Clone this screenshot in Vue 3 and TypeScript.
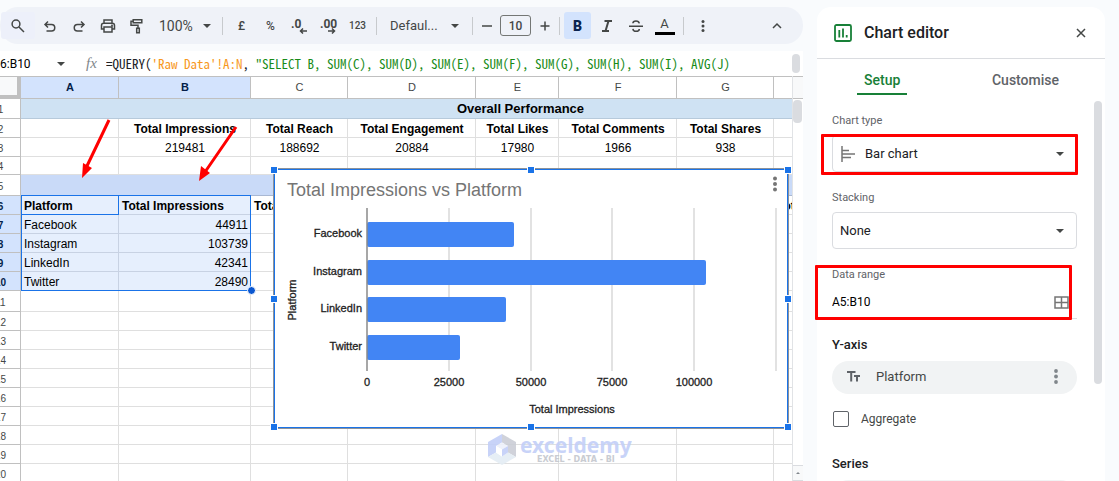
<script setup lang="ts">
import { ref } from 'vue'

type Kind = 'banner' | 'band' | 'head' | 'num' | 'plain'
interface SheetRow {
  n: number
  kind: Kind
  size: number
  cells: string[]
}

const columns = ['A', 'B', 'C', 'D', 'E', 'F', 'G', '']

const blank = (n: number, size = 19): SheetRow => ({ n, kind: 'plain', size, cells: Array(8).fill('') })

const rows: SheetRow[] = [
  { n: 1, kind: 'banner', size: 20, cells: ['Overall Performance'] },
  {
    n: 2,
    kind: 'head',
    size: 19,
    cells: ['', 'Total Impressions', 'Total Reach', 'Total Engagement', 'Total Likes', 'Total Comments', 'Total Shares', ''],
  },
  { n: 3, kind: 'num', size: 19, cells: ['', '219481', '188692', '20884', '17980', '1966', '938', ''] },
  blank(4, 18),
  { n: 5, kind: 'band', size: 21, cells: [''] },
  { n: 6, kind: 'plain', size: 19, cells: ['Platform', 'Total Impressions', 'Total', '', '', '', '', 'Total'] },
  { n: 7, kind: 'plain', size: 19, cells: ['Facebook', '44911', '', '', '', '', '', ''] },
  { n: 8, kind: 'plain', size: 19, cells: ['Instagram', '103739', '', '', '', '', '', ''] },
  { n: 9, kind: 'plain', size: 19, cells: ['LinkedIn', '42341', '', '', '', '', '', ''] },
  { n: 10, kind: 'plain', size: 19, cells: ['Twitter', '28490', '', '', '', '', '', ''] },
  blank(11, 21),
  ...[12, 13, 14, 15, 16, 17, 18, 19, 20].map((n) => blank(n)),
]

const inSelection = (n: number) => n >= 6 && n <= 10

const chart = [
  { label: 'Facebook', value: 44911 },
  { label: 'Instagram', value: 103739 },
  { label: 'LinkedIn', value: 42341 },
  { label: 'Twitter', value: 28490 },
]
const ticks = [0, 25000, 50000, 75000, 100000, 125000]
const toX = (v: number) => 92 + Math.round((v / 125000) * 409)
const barY = (i: number) => 52 + Math.round(i * 37.6)

const handles = ['nw', 'n', 'ne', 'w', 'e', 'sw', 's', 'se']

const zoom = ref('100%')
const font = ref('Defaul...')
const fontSize = ref('10')
const nameBox = ref('6:B10')
const chartType = ref('Bar chart')
const stacking = ref('None')
const dataRange = ref('A5:B10')
const aggregate = ref(false)
</script>

<template>
  <div class="page">
    <main class="workspace">
      <div class="toolbar" role="toolbar" aria-label="Formatting">
        <button class="tool search" aria-label="Search">
          <svg width="16" height="16" viewBox="0 0 16 16"><circle cx="6" cy="6" r="3.9" /><path d="M9 9l5 5" /></svg>
        </button>
        <button class="tool" aria-label="Undo">
          <svg width="16" height="16" viewBox="0 0 16 16"><path d="M6 3.500L3 6.500l3 3M3.200 6.500h6.300a3.200 3.200 0 0 1 0 6.500H4.500" /></svg>
        </button>
        <button class="tool" aria-label="Redo">
          <svg width="16" height="16" viewBox="0 0 16 16"><path d="M10 3.500l3 3-3 3M12.800 6.500H6.500a3.200 3.200 0 0 0 0 6.500h5" /></svg>
        </button>
        <button class="tool" aria-label="Print">
          <svg width="16" height="16" viewBox="0 0 16 16"><path d="M4 5V2h8v3M4 11H1.500V7.500A2.200 2.200 0 0 1 3.700 5.300h8.600a2.200 2.200 0 0 1 2.200 2.200V11H12M4 9h8v5H4z" /><circle cx="12" cy="7.600" r=".4" /></svg>
        </button>
        <button class="tool" aria-label="Paint format">
          <svg width="16" height="16" viewBox="0 0 16 16"><path d="M4.200 1.700h8.600v3H4.200zM4 3.200H2v4h7v3M7.700 10.200h2.600v4.600H7.700z" /></svg>
        </button>
        <span class="dropdown zoom">
          <select v-model="zoom" aria-label="Zoom"><option>100%</option></select>
          <i class="caret"></i>
        </span>
        <span class="sep"></span>
        <button class="tool small">£</button>
        <button class="tool small">%</button>
        <button class="tool decimals" aria-label="Decrease decimal places">
          <span>.0</span>
          <svg width="8" height="6" viewBox="0 0 8 6"><path d="M8 3H2M4 .500L1.500 3 4 5.500" /></svg>
        </button>
        <button class="tool decimals" aria-label="Increase decimal places">
          <span>.00</span>
          <svg width="8" height="6" viewBox="0 0 8 6"><path d="M0 3h6M4 .500L6.500 3 4 5.500" /></svg>
        </button>
        <button class="tool format">123</button>
        <span class="sep"></span>
        <span class="dropdown font">
          <select v-model="font" aria-label="Font"><option>Defaul...</option></select>
          <i class="caret"></i>
        </span>
        <span class="sep"></span>
        <button class="tool step" aria-label="Decrease font size">
          <svg width="12" height="12" viewBox="0 0 12 12"><path d="M1 6h10" /></svg>
        </button>
        <input v-model="fontSize" class="size" aria-label="Font size" />
        <button class="tool step" aria-label="Increase font size">
          <svg width="12" height="12" viewBox="0 0 12 12"><path d="M1.500 6h9M6 1.500v9" /></svg>
        </button>
        <span class="sep"></span>
        <button class="tool bold" aria-pressed="true">B</button>
        <button class="tool" aria-label="Italic">
          <svg class="heavy" width="14" height="14" viewBox="0 0 14 14"><path d="M4.500 2h7.500M2 12h7M8.500 2l-3 10" /></svg>
        </button>
        <button class="tool" aria-label="Strikethrough">
          <svg width="16" height="16" viewBox="0 0 16 16"><path d="M1 8.200h14M11.300 5.300C11 3.500 9.800 2.900 8 2.900S4.900 3.700 4.900 5.300M4.900 10.800c.2 1.700 1.400 2.500 3.100 2.500s3.300-.7 3.300-2.400" /></svg>
        </button>
        <button class="tool ink" aria-label="Text colour">
          <span>A</span>
        </button>
        <span class="sep"></span>
        <button class="tool" aria-label="More">
          <svg class="dots" width="4" height="14" viewBox="0 0 4 14"><circle cx="2" cy="2.500" r="1.500" /><circle cx="2" cy="7" r="1.500" /><circle cx="2" cy="11.500" r="1.500" /></svg>
        </button>
        <button class="tool collapse" aria-label="Hide the menus">
          <svg width="10" height="8" viewBox="0 0 10 8"><path d="M1 6l4-4 4 4" /></svg>
        </button>
      </div>

      <div class="formula-bar">
        <input v-model="nameBox" class="name-box" aria-label="Name box" />
        <i class="caret"></i>
        <span class="fx">fx</span>
        <code class="formula">=QUERY(<span class="ref">'Raw Data'!A:N</span>, <span class="str">"SELECT B, SUM(C), SUM(D), SUM(E), SUM(F), SUM(G), SUM(H), SUM(I), AVG(J)</span></code>
        <span class="formula-thumb"></span>
      </div>

      <div class="sheet">
        <div class="grid">
          <table>
            <colgroup>
              <col class="c-row" /><col class="c-a" /><col class="c-b" /><col class="c-c" /><col class="c-d" />
              <col class="c-e" /><col class="c-f" /><col class="c-g" /><col class="c-h" />
            </colgroup>
            <thead>
              <tr>
                <th class="corner"></th>
                <th v-for="(c, i) in columns" :key="i" scope="col" :class="{ picked: i < 2 }">{{ c }}</th>
              </tr>
            </thead>
            <tbody>
              <tr v-for="r in rows" :key="r.n" :class="[r.kind, 'h' + r.size, { range: inSelection(r.n), titles: r.n === 6 }]">
                <th scope="row">{{ r.n }}</th>
                <td v-for="(c, i) in r.cells" :key="i" :colspan="r.cells.length === 1 ? 8 : 1">{{ c }}</td>
              </tr>
            </tbody>
          </table>

          <div class="selection"><span class="active-cell"></span><span class="fill-handle"></span></div>

          <div class="brand">
            <svg width="28" height="31" viewBox="0 0 28 31">
              <path d="M14 0L0 8v15l8-4.500V12l6-3.500z" fill="#c3cff8" />
              <path d="M14 0l14 8v15l-8-4.500V12l-6-3.500z" fill="#cbced6" />
              <path d="M0 23l14 8 14-8-8-4.500-6 4-6-4z" fill="#e4edf4" />
              <path d="M14 8.500l6 3.500-6 3.500L8 12z" fill="#eef1fb" />
              <path d="M8 12l6 3.500v7l-6-4z" fill="#fff" />
              <path d="M20 12l-6 3.500v7l6-4z" fill="#c3cff8" />
            </svg>
            <div class="brand-text">
              <strong>exceldemy</strong>
              <small>EXCEL - DATA - BI</small>
            </div>
          </div>

          <figure class="chart">
            <svg class="plot" width="512" height="257" viewBox="0 0 512 257" role="img" aria-label="Total Impressions vs Platform">
              <text class="title" x="12" y="26">Total Impressions vs Platform</text>
              <line v-for="t in ticks.slice(1)" :key="t" class="gridline" :x1="toX(t)" :x2="toX(t)" y1="38" y2="201" />
              <g v-for="(b, i) in chart" :key="b.label">
                <rect class="bar" x="92" :y="barY(i)" :width="toX(b.value) - 92" height="25" rx="2" />
                <text class="label end" x="87" :y="barY(i) + 15">{{ b.label }}</text>
              </g>
              <line class="axis" x1="92" x2="92" y1="38" y2="201" />
              <text v-for="t in ticks.slice(0, 5)" :key="'t' + t" class="label mid" :x="toX(t)" y="216">{{ t }}</text>
              <text class="label mid" x="297" y="243">Total Impressions</text>
              <text class="label mid" transform="translate(21 130) rotate(-90)">Platform</text>
            </svg>
            <button class="chart-menu" aria-label="Chart options">
              <svg width="6" height="16" viewBox="0 0 6 16"><circle cx="3" cy="2.500" r="2" /><circle cx="3" cy="8" r="2" /><circle cx="3" cy="13.500" r="2" /></svg>
            </button>
            <span v-for="h in handles" :key="h" class="handle" :class="h"></span>
          </figure>

          <svg class="arrows" width="260" height="200" viewBox="0 0 260 200" aria-hidden="true">
            <path class="shaft" d="M109 43L86 91M236 50L205 95" />
            <path class="tip" d="M82 101L83 86l9 5zM199 104l2-15 9 7z" />
          </svg>
        </div>
        <div class="scroller">
          <span class="scroller-head"></span>
          <span class="scroller-thumb"></span>
          <button class="scroller-up" aria-label="Scroll up"></button>
        </div>
      </div>
    </main>

    <aside class="editor">
      <header>
        <svg width="18" height="18" viewBox="0 0 18 18">
          <rect x="1" y="1" width="16" height="16" rx="1.500" fill="none" stroke="#188038" stroke-width="1.800" />
          <path d="M5.300 6v7.500M9 4.500v9M12.700 11v2.500" fill="none" stroke="#188038" stroke-width="1.800" />
        </svg>
        <h2>Chart editor</h2>
        <button class="close" aria-label="Close">
          <svg width="10" height="10" viewBox="0 0 10 10"><path d="M1 1l8 8M9 1L1 9" /></svg>
        </button>
      </header>
      <nav role="tablist">
        <button role="tab" aria-selected="true" class="on">Setup</button>
        <button role="tab" aria-selected="false">Customise</button>
      </nav>
      <div class="body">
        <form class="fields" @submit.prevent>
          <label for="chart-type">Chart type</label>
          <div class="select with-icon">
            <svg width="14" height="16" viewBox="0 0 14 16"><path d="M1 0v16M1 4.500h7M1 8h13M1 11.500h9" /></svg>
            <select id="chart-type" v-model="chartType"><option>Bar chart</option></select>
            <i class="caret"></i>
            <span class="mark mark-type"></span>
          </div>

          <label for="stacking">Stacking</label>
          <div class="select">
            <select id="stacking" v-model="stacking"><option>None</option></select>
            <i class="caret"></i>
          </div>

          <label for="range">Data range</label>
          <div class="range-box">
            <input id="range" v-model="dataRange" />
            <button aria-label="Select data range">
              <svg width="15" height="13" viewBox="0 0 15 13"><path d="M1 1h13v11H1zM7.500 1v11M1 6.500h13" /></svg>
            </button>
            <span class="mark mark-range"></span>
          </div>

          <h3 class="first">Y-axis</h3>
          <div class="pill">
            <svg width="13" height="11" viewBox="0 0 13 11"><path d="M0 1h8.500M4.200 1v9.500M7 5h6M10 5v5.500" /></svg>
            <span>Platform</span>
            <button aria-label="Series options">
              <svg width="4" height="15" viewBox="0 0 4 15"><circle cx="2" cy="2" r="1.900" /><circle cx="2" cy="7.500" r="1.900" /><circle cx="2" cy="13" r="1.900" /></svg>
            </button>
          </div>
          <label class="check"><input v-model="aggregate" type="checkbox" />Aggregate</label>
          <h3 class="second">Series</h3>
          <div class="pill"></div>
        </form>
        <span class="body-thumb"></span>
      </div>
    </aside>
  </div>
</template>

<style>
body {
  background: #f9fbfd;
}
</style>

<style scoped>
.page {
  display: flex;
  gap: 14px;
  height: 100vh;
  padding: 7px 14px 0 0;
  box-sizing: border-box;
  overflow: hidden;
  background: #f9fbfd;
  color: #202124;
  font-family: Roboto, "Liberation Sans", sans-serif;
}
.page *,
.page *::before,
.page *::after {
  box-sizing: border-box;
}
button,
select,
input {
  margin: 0;
  padding: 0;
  border: 0;
  background: none;
  color: inherit;
  font-family: inherit;
  font-size: inherit;
  appearance: none;
  outline: none;
}
svg {
  display: block;
  flex: none;
}
.caret {
  flex: none;
  border: 4px solid transparent;
  border-top-color: #444746;
  border-bottom: 0;
  pointer-events: none;
}
.workspace {
  flex: 1;
  min-width: 0;
  display: flex;
  flex-direction: column;
}

/* toolbar */
.toolbar {
  flex: none;
  display: flex;
  align-items: center;
  height: 37px;
  padding: 0 12px 0 1px;
  border-radius: 18px;
  background: #eff2f8;
  color: #444746;
}
.tool {
  flex: none;
  display: flex;
  align-items: center;
  justify-content: center;
  width: 29px;
  height: 27px;
  border-radius: 3px;
}
.tool svg {
  fill: none;
  stroke: #444746;
  stroke-width: 1.5;
}
.tool svg.heavy {
  stroke-width: 2;
}
.tool svg.dots {
  fill: #444746;
  stroke: none;
}
.search {
  width: 34px;
  background: #edf0fa;
}
.dropdown {
  flex: none;
  display: flex;
  align-items: center;
  position: relative;
}
.dropdown select {
  width: 100%;
  height: 27px;
}
.dropdown .caret {
  position: absolute;
  right: 7px;
}
.zoom {
  width: 67px;
  font-size: 14px;
}
.zoom select {
  padding-left: 8px;
}
.font {
  width: 87px;
  font-size: 13px;
  font-weight: 500;
}
.font select {
  padding-left: 9px;
}
.font .caret {
  right: 9px;
}
.sep {
  flex: none;
  width: 1px;
  height: 18px;
  margin: 0 4px;
  background: #c7cacd;
}
.small {
  font-size: 12px;
  font-weight: 500;
}
.format {
  font-size: 10px;
  font-weight: 500;
}
.decimals {
  flex-direction: column;
  align-items: flex-start;
  padding: 2px 0 0 6px;
  font-size: 12px;
  font-weight: 700;
  line-height: 11px;
}
.decimals svg {
  margin: -2px 0 0 8px;
}
.step {
  width: 20px;
}
.size {
  flex: none;
  width: 31px;
  height: 21px;
  margin: 0 4px 0 3px;
  border: 1px solid #747775;
  border-radius: 3px;
  text-align: center;
  font-size: 12px;
  font-weight: 500;
}
.bold {
  width: 27px;
  margin-right: 1px;
  background: #d3e3fd;
  color: #0a2350;
  font-size: 14px;
  font-weight: 900;
}
.ink span {
  width: 20px;
  height: 18px;
  border-bottom: 3px solid #000;
  font-size: 13px;
  line-height: 14px;
}
.collapse {
  margin-left: auto;
}

/* formula bar */
.formula-bar {
  flex: none;
  display: flex;
  align-items: center;
  height: 25px;
  margin-top: 7px;
  background: #fff;
}
.name-box {
  width: 57px;
  font-size: 12px;
  color: #000;
}
.fx {
  width: 41px;
  padding-left: 21px;
  color: #80868b;
  font: italic 15px "Liberation Serif", serif;
}
.formula {
  flex: 1;
  min-width: 0;
  overflow: hidden;
  white-space: pre;
  color: #202124;
  font-family: "Noto Sans Mono CJK SC", "Liberation Mono", monospace;
  font-size: 13px;
  line-height: 20px;
}
.ref {
  color: #f7981d;
}
.str {
  color: #188b18;
}
.formula-thumb {
  flex: none;
  width: 8px;
  height: 19px;
  margin-right: 3px;
  border-radius: 4px;
  background: #dadce0;
}

/* sheet */
.sheet {
  flex: 1;
  min-height: 0;
  display: flex;
  background: #fff;
}
.grid {
  flex: 1;
  min-width: 0;
  position: relative;
  overflow: hidden;
  border-top: 1px solid #c0c0c0;
}
table {
  width: 1043px;
  margin-left: -20px;
  table-layout: fixed;
  border-collapse: separate;
  border-spacing: 0;
  font-family: "Liberation Sans", Arial, sans-serif;
  font-size: 12px;
  color: #000;
}
.c-row { width: 41px; }
.c-a { width: 98px; }
.c-b { width: 132px; }
.c-c { width: 97px; }
.c-d { width: 128px; }
.c-e { width: 83px; }
.c-f { width: 118px; }
.c-g { width: 97px; }
.c-h { width: 249px; }
th,
td {
  padding: 2px 0 0 1px;
  border: 0 solid #dfdfdf;
  border-width: 0 1px 1px 0;
  line-height: 15px;
  white-space: nowrap;
  overflow: hidden;
}
th {
  border-color: #c0c0c0;
  color: #444746;
  font-size: 10px;
  font-weight: 400;
  text-align: center;
}
thead th {
  height: 22px;
  padding-top: 0;
  font-size: 11px;
}
thead .picked {
  background: #d3e3fd;
  color: #041e49;
  font-weight: 700;
}
.corner {
  border-right: 4px solid #c0c0c0;
  border-bottom: 4px solid #c0c0c0;
  background: #f8f9fa;
}
.h18 > * { height: 18px; }
.h19 > * { height: 19px; }
.h20 > * { height: 20px; }
.h21 > * { height: 21px; }
.banner td {
  padding: 0 2px 0 0;
  border-color: #b7cadb;
  background: #cfe2f3;
  font-size: 13px;
  font-weight: 700;
  text-align: center;
}
.band td {
  background: #c9daf8;
  border-color: #a9b8d3;
}
.head td {
  font-weight: 700;
  text-align: center;
}
.num td {
  text-align: center;
}
.range th {
  background: #d3e3fd;
  color: #041e49;
  font-weight: 700;
}
.range td {
  padding: 2px 2px 0 3px;
}
.range td:nth-child(2),
.range td:nth-child(3) {
  background: #e6effd;
  border-color: #c8d2e3;
}
.range td:nth-child(3) {
  text-align: right;
}
.titles td,
.titles td:nth-child(3) {
  font-weight: 700;
  text-align: left;
}
.selection {
  position: absolute;
  left: 21px;
  top: 118px;
  width: 230px;
  height: 96px;
  border: 1px solid #1a73e8;
}
.active-cell {
  position: absolute;
  left: -1px;
  top: -1px;
  width: 98px;
  height: 20px;
  border: 1px solid #1a73e8;
}
.fill-handle {
  position: absolute;
  right: -6px;
  bottom: -5px;
  width: 9px;
  height: 9px;
  border: 1px solid #fff;
  border-radius: 50%;
  background: #0b57d0;
}

/* embedded chart */
.chart {
  position: absolute;
  left: 274px;
  top: 92px;
  margin: 0;
  border: 1px solid #1a73e8;
  background: #fff;
  box-shadow: 0 0 0 1px #8d9299;
}
.title {
  fill: #757575;
  font: 18px "Liberation Sans", Arial, sans-serif;
}
.label {
  fill: #222;
  stroke: #222;
  stroke-width: 0.3px;
  font: 11px "Liberation Sans", Arial, sans-serif;
}
.end {
  text-anchor: end;
}
.mid {
  text-anchor: middle;
}
.gridline {
  stroke: #e2e2e2;
  stroke-width: 2;
}
.axis {
  stroke: #8a8a8a;
  stroke-width: 1.5;
}
.bar {
  fill: #4285f4;
}
.chart-menu {
  position: absolute;
  top: 6px;
  right: 9px;
}
.chart-menu svg {
  fill: #757575;
}
.handle {
  position: absolute;
  width: 8px;
  height: 8px;
  border: 1px solid #fff;
  background: #1a73e8;
}
.nw, .w, .sw { left: -5px; }
.ne, .e, .se { right: -5px; }
.n, .s { left: calc(50% - 4px); }
.nw, .n, .ne { top: -4px; }
.sw, .s, .se { bottom: -4px; }
.w, .e { top: calc(50% - 4px); }

.arrows {
  position: absolute;
  left: 0;
  top: 0;
  pointer-events: none;
}
.shaft {
  fill: none;
  stroke: #f00;
  stroke-width: 3;
}
.tip {
  fill: #f00;
}

.brand {
  position: absolute;
  left: 488px;
  top: 357px;
  display: flex;
  gap: 4px;
  opacity: 0.9;
}
.brand-text {
  display: flex;
  flex-direction: column;
  align-items: center;
}
.brand strong {
  color: #c3cff8;
  font: 700 21px/22px "Noto Sans", "Open Sans", sans-serif;
}
.brand small {
  color: #c4c7ce;
  font: 700 8px/8px "DejaVu Sans", sans-serif;
}

.scroller {
  flex: none;
  display: flex;
  flex-direction: column;
  width: 11px;
  border-left: 1px solid #e1e3e6;
}
.scroller-head {
  height: 23px;
  border-top: 1px solid #c0c0c0;
  border-bottom: 1px solid #c0c0c0;
  background: #f8f9fa;
}
.scroller-thumb {
  width: 9px;
  height: 23px;
  margin-top: 1px;
  border-radius: 4px;
  background: #dadce0;
}
.scroller-up {
  display: flex;
  align-items: center;
  justify-content: center;
  width: 10px;
  height: 16px;
  margin-top: auto;
  border-top: 1px solid #dadce0;
  border-bottom: 1px solid #dadce0;
  background: #f8f9fa;
}
.scroller-up::before {
  content: "";
  border: 2px solid transparent;
  border-bottom-color: #80868b;
  border-top: 0;
}

/* chart editor */
.editor {
  flex: none;
  display: flex;
  flex-direction: column;
  width: 288px;
  border-radius: 14px 14px 0 0;
  background: #fff;
}
.editor header {
  flex: none;
  display: flex;
  align-items: center;
  gap: 12px;
  height: 52px;
  padding: 0 19px 0 17px;
  border-bottom: 1px solid #dadce0;
}
h2 {
  flex: 1;
  margin: 0;
  font-size: 16px;
  font-weight: 500;
  line-height: 20px;
}
.close svg,
.range-box svg,
.pill > svg,
.with-icon svg {
  fill: none;
  stroke: #444746;
  stroke-width: 1.5;
}
nav {
  flex: none;
  display: flex;
  justify-content: space-between;
  height: 36px;
  padding: 0 39px 0 40px;
}
nav button {
  padding: 7px 7px 0;
  border-bottom: 2px solid transparent;
  color: #5f6368;
  font-size: 14px;
  font-weight: 500;
}
nav .on {
  border-color: #188038;
  color: #188038;
}
.body {
  flex: 1;
  min-height: 0;
  display: flex;
  gap: 17px;
  padding: 0 3px 0 15px;
}
.fields {
  flex: 1;
  min-width: 0;
  display: flex;
  flex-direction: column;
}
.fields > * {
  flex: none;
}
.fields label {
  margin: 18px 0 6px;
  color: #5f6368;
  font-size: 11px;
  line-height: 16px;
}
.select {
  position: relative;
  display: flex;
  align-items: center;
  height: 37px;
  padding: 0 12px 0 7px;
  border: 1px solid #dadce0;
  border-radius: 4px;
  font-size: 13px;
}
.select select {
  flex: 1;
  height: 35px;
  margin-right: -8px;
}
.with-icon {
  gap: 10px;
  padding-left: 8px;
}
.with-icon select {
  margin-right: -18px;
}
.with-icon svg,
.pill > svg,
.range-box svg {
  stroke: #757575;
}
.mark {
  position: absolute;
  border: 3px solid #f00;
  border-radius: 1px;
  pointer-events: none;
}
.mark-type {
  inset: -2px -2px -4px -12px;
}
.mark-range {
  inset: -24px 5px -2px -17px;
}
.range-box {
  position: relative;
  display: flex;
  align-items: center;
  height: 30px;
  padding: 0 8px 3px 0;
  border-bottom: 1px solid #dadce0;
}
.range-box input {
  flex: 1;
  min-width: 0;
  font-size: 12px;
  color: #000;
}
h3 {
  margin: 18px 0 8px;
  font-size: 13px;
  font-weight: 500;
  line-height: 16px;
}
h3.second {
  margin-top: 29px;
}
.pill {
  display: flex;
  align-items: center;
  gap: 16px;
  height: 33px;
  padding: 0 19px 2px 15px;
  border-radius: 17px;
  background: #f1f3f4;
  color: #444746;
  font-size: 13px;
}
.pill > svg {
  stroke: #5f6368;
  stroke-width: 2;
}
.pill span {
  flex: 1;
}
.pill button svg {
  fill: #80868b;
}
.fields .check {
  display: flex;
  align-items: center;
  gap: 12px;
  margin: 17px 0 0 1px;
  color: #444746;
  font-size: 12px;
}
.check input {
  width: 16px;
  height: 16px;
  border: 1px solid #5f6368;
  border-radius: 2px;
}
.body-thumb {
  flex: none;
  width: 8px;
  height: 283px;
  margin-top: 6px;
  border-radius: 4px;
  background: #dadce0;
}
</style>
